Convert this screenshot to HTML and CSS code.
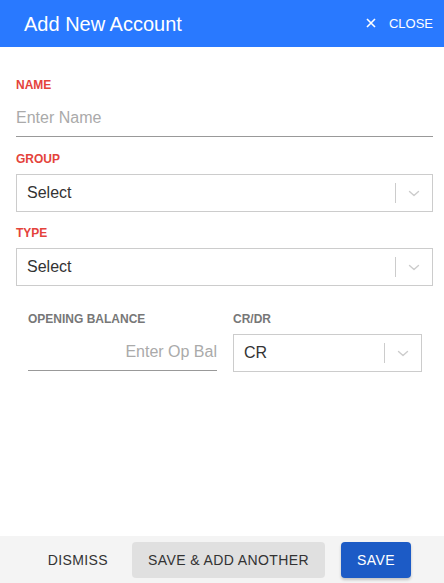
FILE: index.html
```html
<!DOCTYPE html>
<html lang="en">
<head>
<meta charset="utf-8">
<title>Add New Account</title>
<link rel="stylesheet" href="styles.css">
</head>
<body>
<div class="dialog">
  <header class="header">
    <h1 class="title">Add New Account</h1>
    <button class="close">
      <svg class="close-icon" viewBox="0 0 10 10" width="10" height="10"><path d="M1 1L9 9M9 1L1 9" stroke="#fff" stroke-width="1.6" fill="none"/></svg>
      <span>CLOSE</span>
    </button>
  </header>

  <main class="content">
    <div class="field field-name">
      <label class="label">NAME</label>
      <div class="text-input"><span class="placeholder">Enter Name</span></div>
    </div>

    <div class="field field-group">
      <label class="label">GROUP</label>
      <div class="select">
        <span class="select-value">Select</span>
        <span class="separator"></span>
        <span class="indicator"><svg viewBox="0 0 20 20" width="20" height="20"><path d="M5.5 8.5L10 12.5L14.5 8.5" stroke="#ccc" stroke-width="1.4" fill="none" stroke-linecap="round" stroke-linejoin="round"/></svg></span>
      </div>
    </div>

    <div class="field field-type">
      <label class="label">TYPE</label>
      <div class="select">
        <span class="select-value">Select</span>
        <span class="separator"></span>
        <span class="indicator"><svg viewBox="0 0 20 20" width="20" height="20"><path d="M5.5 8.5L10 12.5L14.5 8.5" stroke="#ccc" stroke-width="1.4" fill="none" stroke-linecap="round" stroke-linejoin="round"/></svg></span>
      </div>
    </div>

    <div class="row">
      <div class="col">
        <label class="label label-muted">OPENING BALANCE</label>
        <div class="text-input text-right"><span class="placeholder">Enter Op Bal</span></div>
      </div>
      <div class="col">
        <label class="label label-muted">CR/DR</label>
        <div class="select">
          <span class="select-value">CR</span>
          <span class="separator"></span>
          <span class="indicator"><svg viewBox="0 0 20 20" width="20" height="20"><path d="M5.5 8.5L10 12.5L14.5 8.5" stroke="#ccc" stroke-width="1.4" fill="none" stroke-linecap="round" stroke-linejoin="round"/></svg></span>
        </div>
      </div>
    </div>
  </main>

  <footer class="footer">
    <button class="btn btn-text">DISMISS</button>
    <button class="btn btn-grey">SAVE &amp; ADD ANOTHER</button>
    <button class="btn btn-primary">SAVE</button>
  </footer>
</div>
</body>
</html>
```

FILE: styles.css
```css
* { box-sizing: border-box; }

html, body {
  margin: 0;
  padding: 0;
  height: 100%;
  background: #fff;
  font-family: "Liberation Sans", Arial, sans-serif;
}

.dialog {
  height: 583px;
  display: flex;
  flex-direction: column;
}

.header {
  height: 47px;
  flex: none;
  background: #2979ff;
  display: flex;
  align-items: center;
  justify-content: space-between;
  padding: 0 11px 0 24px;
}

.title {
  margin: 0;
  font-size: 20px;
  font-weight: normal;
  color: #fff;
  line-height: 22px;
}

.close {
  background: none;
  border: 0;
  padding: 0;
  color: #fff;
  font-family: inherit;
  font-size: 13px;
  display: flex;
  align-items: center;
  gap: 13px;
  line-height: 15px;
  margin-top: -1px;
}

.close-icon { display: block; }

.content {
  flex: 1;
  padding: 31px 11px 0 16px;
}

.field { display: flex; flex-direction: column; }
.field-name { margin-bottom: 15px; }
.field-group { margin-bottom: 14px; }

.label {
  font-size: 12px;
  font-weight: bold;
  line-height: 14px;
  color: #e4433b;
  margin-bottom: 8px;
}

.label-muted { color: #777; }

.text-input {
  height: 37px;
  border-bottom: 1px solid #999;
  display: flex;
  align-items: center;
  font-size: 16px;
  line-height: 18px;
}

.text-right { justify-content: flex-end; }

.placeholder { color: #aaa; }

.select {
  height: 38px;
  border: 1px solid #ccc;
  border-radius: 0;
  display: flex;
  align-items: center;
  font-size: 16px;
  line-height: 18px;
  color: #333;
}

.select-value {
  flex: 1;
  padding-left: 10px;
}

.separator {
  align-self: stretch;
  width: 1px;
  margin: 8px 0;
  background: #ccc;
}

.indicator {
  display: flex;
  padding: 8px;
}

.indicator svg { display: block; }

.row {
  display: flex;
  gap: 16px;
  padding: 26px 11px 0 12px;
}

.col {
  flex: 1;
  display: flex;
  flex-direction: column;
}

.footer {
  height: 47px;
  flex: none;
  background: #f4f4f4;
  display: flex;
  align-items: flex-start;
  justify-content: flex-end;
  padding: 6px 33px 0 0;
}

.btn {
  height: 36px;
  padding: 0 16px;
  border: 0;
  border-radius: 4px;
  font-family: "Liberation Sans", Arial, sans-serif;
  font-size: 14px;
  letter-spacing: 0.4px;
  line-height: 16px;
  color: #333;
  background: transparent;
}

.btn-text { margin-right: 8px; }

.btn-grey {
  background: #e0e0e0;
  margin-right: 16px;
}

.btn-primary {
  background: #1c5bc6;
  color: #fff;
  box-shadow: 0 2px 3px rgba(0,0,0,0.2);
}
```
